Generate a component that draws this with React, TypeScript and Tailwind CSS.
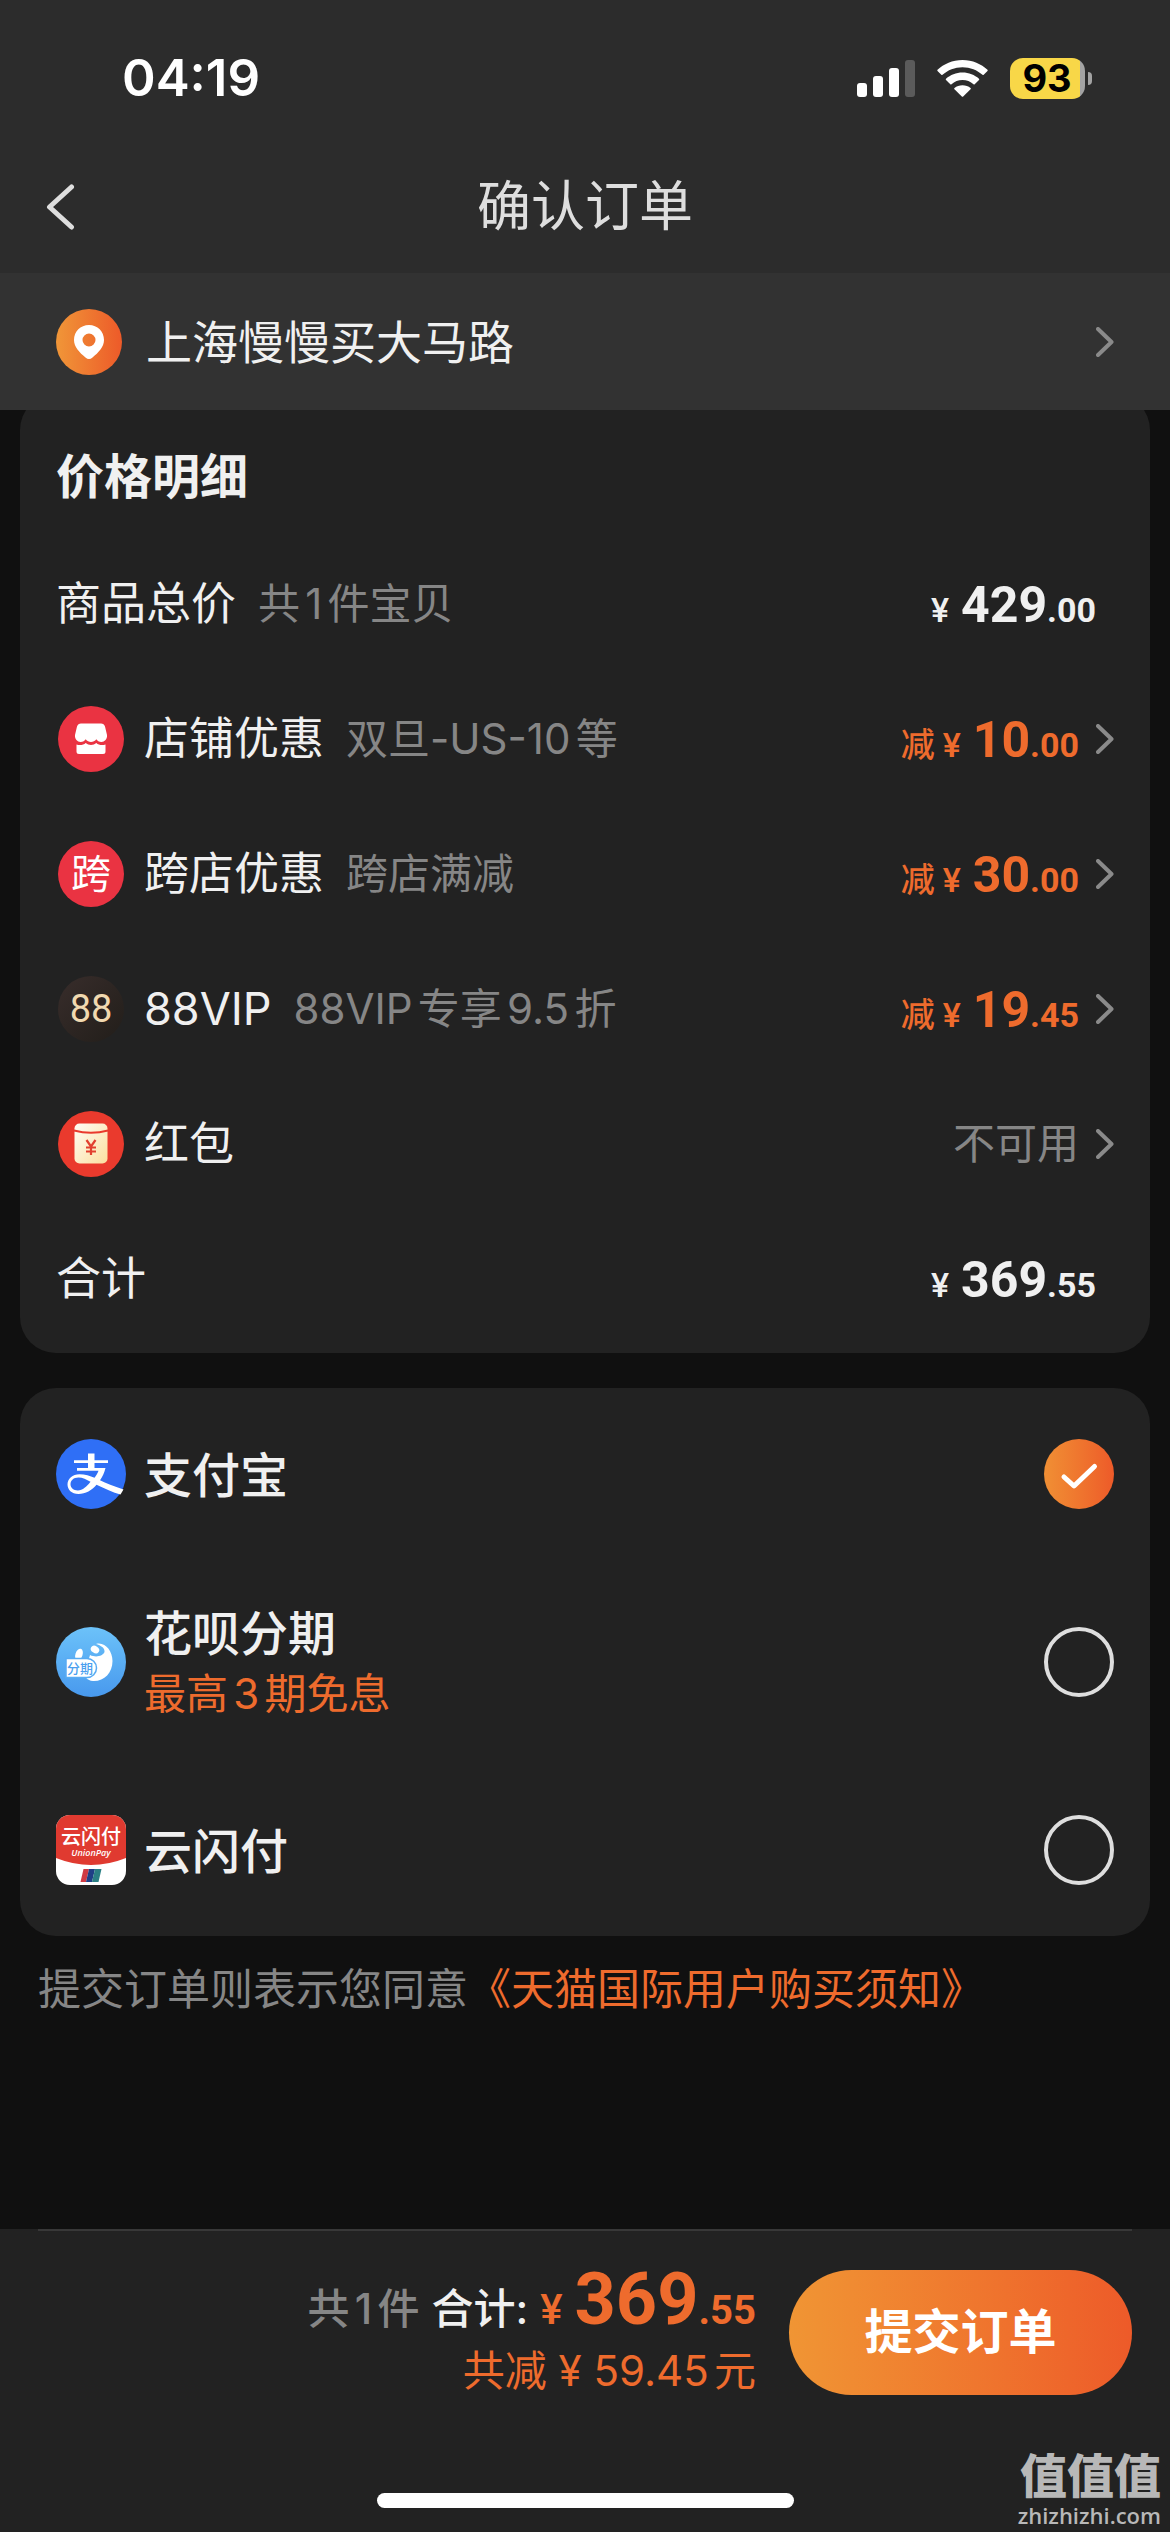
import React, { useState } from "react"
import clsx from "clsx"

const NUM_FONT = "font-[Roboto,'Noto_Sans_CJK_SC',sans-serif]"

function StatusBar() {
  return (
    <div className="flex h-[141px] items-center justify-between pt-[15px] pr-[78px] pl-[122px]">
      <span className="text-[51px] leading-[60px] font-semibold text-white">04:19</span>
      <div className="flex items-center gap-[22px]">
        <svg width="58" height="38" viewBox="0 0 58 38" aria-hidden="true">
          <rect x="0" y="24" width="10" height="14" rx="3" fill="#fff" />
          <rect x="16" y="17" width="10" height="21" rx="3" fill="#fff" />
          <rect x="32" y="9" width="10" height="29" rx="3" fill="#fff" />
          <rect x="48" y="1" width="10" height="37" rx="3" fill="#5b5b5b" />
        </svg>
        <svg width="51" height="38" viewBox="0 0 51 38" fill="#fff" aria-hidden="true">
          <path d="M25.500 1C35.500 1 44.300 5 50.500 10.800Q51 11.400 50.500 12L46.700 15.800Q46.100 16.300 45.500 15.800C40.200 11 33.200 8.200 25.500 8.200S10.800 11 5.500 15.800Q4.900 16.300 4.300 15.800L.5 12Q0 11.400.5 10.800C6.700 5 15.500 1 25.500 1Z" />
          <path d="M25.500 13.500C31.900 13.500 37.600 15.900 42 19.700Q42.600 20.300 42 20.900L37.700 25.200Q37.100 25.700 36.500 25.200C33.500 22.600 29.700 21 25.500 21S17.500 22.600 14.500 25.200Q13.900 25.700 13.300 25.200L9 20.900Q8.400 20.300 9 19.700C13.400 15.900 19.100 13.500 25.500 13.500Z" />
          <path d="M25.500 26.300C28.600 26.300 31.400 27.300 33.500 29.100Q34.100 29.700 33.500 30.300L26.200 37.500Q25.500 38.100 24.800 37.500L17.500 30.300Q16.900 29.700 17.500 29.100C19.600 27.300 22.400 26.300 25.500 26.300Z" />
        </svg>
        <div className="flex items-center gap-[3px]">
          <div className="h-[41px] w-[75px] rounded-[13px] bg-[linear-gradient(to_right,#f8d748_70px,#a3a3a3_70px)] pr-px text-center text-[38px] leading-[41px] font-bold text-black">
            93
          </div>
          <div className="h-[13px] w-[4px] rounded-r-full bg-[#a3a3a3]" />
        </div>
      </div>
    </div>
  )
}

function ChevronRight() {
  return (
    <svg
      width="18"
      height="30"
      viewBox="0 0 18 30"
      fill="none"
      stroke="#8a8a8a"
      strokeWidth="4"
      strokeLinecap="round"
      strokeLinejoin="round"
      className="shrink-0"
      aria-hidden="true"
    >
      <path d="M2 2L15.500 15L2 28" />
    </svg>
  )
}

function PinIcon() {
  return (
    <svg width="66" height="66" viewBox="0 0 66 66" aria-hidden="true">
      <defs>
        <linearGradient id="pin" x1="0" x2="1" y1="0" y2="0">
          <stop offset="0" stopColor="#f09638" />
          <stop offset="1" stopColor="#ed5a29" />
        </linearGradient>
      </defs>
      <circle cx="33" cy="33" r="33" fill="url(#pin)" />
      <path
        fillRule="evenodd"
        fill="#fff"
        d="M33 16C41.500 16 48 22.500 48 31C48 38 42.500 43.500 36.500 48.500Q33 51.500 29.500 48.500C23.500 43.500 18 38 18 31C18 22.500 24.500 16 33 16ZM33 24.500A6.500 6.500 0 1 0 33 37.500A6.500 6.500 0 1 0 33 24.500Z"
      />
    </svg>
  )
}

function ShopIcon() {
  return (
    <svg width="66" height="66" viewBox="0 0 66 66" aria-hidden="true">
      <circle cx="33" cy="33" r="33" fill="#ea3342" />
      <path
        fill="#fff"
        d="M23 17.500H43Q46 17.500 47 20.500L49 29C49.500 33 46.500 36 43.500 36C41 36 39.300 34.800 38.300 33.200C37 35 35 36 33 36S29 35 27.700 33.200C26.700 34.800 25 36 22.500 36C19.500 36 16.500 33 17 29L19 20.500Q20 17.500 23 17.500Z"
      />
      <path
        fill="#fff"
        d="M18.500 38.500C22 39.700 25.500 39 27.700 37C30.500 39.500 35.500 39.500 38.300 37C40.500 39 44 39.700 47.500 38.500V45.500Q47.500 48 45 48H21Q18.500 48 18.500 45.500Z"
      />
    </svg>
  )
}

function CrossShopIcon() {
  return (
    <span className="flex size-[66px] items-center justify-center rounded-full bg-[#ea3342] text-[40px] leading-none text-white">
      跨
    </span>
  )
}

function VipIcon() {
  return (
    <span className="flex size-[66px] items-center justify-center rounded-full bg-linear-to-br from-[#382d2b] to-[#221e1a]">
      <span className={clsx(NUM_FONT, "text-[38px] leading-none text-[#f1d9b0]")}>88</span>
    </span>
  )
}

function RedPacketIcon() {
  return (
    <svg width="66" height="66" viewBox="0 0 66 66" aria-hidden="true">
      <defs>
        <linearGradient id="packet" x1="0" x2="1" y1="0" y2="1">
          <stop offset="0" stopColor="#fffdf5" />
          <stop offset="1" stopColor="#fbdf9f" />
        </linearGradient>
      </defs>
      <circle cx="33" cy="33" r="33" fill="#ea3a2d" />
      <rect x="16.500" y="12.500" width="33" height="40" rx="5" fill="url(#packet)" />
      <path d="M16 19.500Q33 24 50 19.500" fill="none" stroke="#ea3a2d" strokeWidth="2" />
      <path
        d="M28.500 29L33 35.500L37.500 29M33 35.500V44M28 36.500H38M28 40.500H38"
        fill="none"
        stroke="#e2402f"
        strokeWidth="2.200"
      />
    </svg>
  )
}

function AlipayIcon() {
  return (
    <svg width="70" height="70" viewBox="0 0 70 70" aria-hidden="true">
      <circle cx="35" cy="35" r="35" fill="#2f6ff6" />
      <path
        fill="#fff"
        d="M32 14.500H38.500V21.300H52V24H38.500V29H49.500C48.500 33.500 46.500 37.800 44 41.300C50 44.500 57.500 47 67.500 50.500L64.500 55.500C57 53.500 48.500 49.500 40.500 45.700C36 51 29.500 55 22.500 55C15.500 55 11.500 50.500 11.500 45.500C11.500 39.500 16.500 35.200 23.500 35.200C29 35.200 34 36.800 38.500 38.700C40.300 36.500 41.700 34.200 42.500 31.700H21V29H32V24H18V21.300H32Z"
      />
      <path
        fill="#2f6ff6"
        d="M34.500 42.800C30.500 40.500 26.500 38.500 22.500 38.500C17.500 38.500 14.500 41.300 14.500 45.300C14.500 49 17.500 51.500 21.800 51.500C26.500 51.500 31 47.500 34.500 42.800Z"
      />
    </svg>
  )
}

function HuabeiIcon() {
  return (
    <svg width="70" height="70" viewBox="0 0 70 70" aria-hidden="true">
      <defs>
        <linearGradient id="huabei" x1="0" x2="0" y1="0" y2="1">
          <stop offset="0" stopColor="#6cc2f9" />
          <stop offset="1" stopColor="#4899ee" />
        </linearGradient>
      </defs>
      <circle cx="35" cy="35" r="35" fill="url(#huabei)" />
      <path
        fill="#fff"
        d="M40 17C49 14.500 56.500 24 56.500 34C56.500 46 48 54.500 37 54C31 53.500 28.500 50 29 45L34 28C40 31 47 29 48.500 25C49 21 45 18.500 40 17Z"
      />
      <ellipse cx="39" cy="22.500" rx="4.500" ry="3.500" fill="#fff" transform="rotate(35 39 22.500)" />
      <ellipse cx="23" cy="27.500" rx="3.600" ry="6" fill="#fff" transform="rotate(18 23 27.500)" />
      <path d="M10 31.500H31A9.500 9.500 0 0 1 31 50.500H10Z" fill="#fff" stroke="#58abf3" strokeWidth="1.500" />
      <text
        x="24"
        y="46"
        fontSize="13"
        fontWeight="500"
        textAnchor="middle"
        fill="#4c9fef"
        fontFamily="Noto Sans CJK SC, sans-serif"
      >
        分期
      </text>
    </svg>
  )
}

function UnionPayIcon() {
  return (
    <svg width="70" height="70" viewBox="0 0 70 70" aria-hidden="true">
      <defs>
        <clipPath id="unionpay">
          <rect width="70" height="70" rx="14" />
        </clipPath>
      </defs>
      <g clipPath="url(#unionpay)">
        <rect width="70" height="70" fill="#fff" />
        <path d="M0 0H70V43Q35 57 0 43Z" fill="#e03a30" />
        <path d="M27.500 54H33L30 67H24.500Z" fill="#cf3a44" />
        <path d="M33 54H39L36 67H30Z" fill="#1f3f86" />
        <path d="M39 54H45.500L42.500 67H36Z" fill="#2a7f83" />
      </g>
      <text
        x="35"
        y="29"
        fontSize="20"
        fontWeight="500"
        textAnchor="middle"
        fill="#fff"
        fontFamily="Noto Sans CJK SC, sans-serif"
      >
        云闪付
      </text>
      <text
        x="35"
        y="41"
        fontSize="9"
        fontWeight="600"
        fontStyle="italic"
        textAnchor="middle"
        fill="#fff"
        fontFamily="Open Sans, sans-serif"
      >
        UnionPay
      </text>
    </svg>
  )
}

function Price({ value, prefix }: { value: string; prefix?: string }) {
  const [whole, cents] = value.split(".")
  return (
    <span className={clsx(NUM_FONT, "flex items-baseline pt-2 leading-[60px] font-bold")}>
      {prefix && <span className="mr-2 text-[34px] font-medium">{prefix}</span>}
      <span className="mr-3 text-[34px] font-medium">¥</span>
      <span className="text-[50px]">{whole}</span>
      <span className="text-[34px]">.{cents}</span>
    </span>
  )
}

const discounts = [
  { icon: <ShopIcon />, name: "店铺优惠", note: "双旦-US-10等", value: "10.00" },
  { icon: <CrossShopIcon />, name: "跨店优惠", note: "跨店满减", value: "30.00" },
  { icon: <VipIcon />, name: "88VIP", note: "88VIP专享9.5折", value: "19.45" },
  { icon: <RedPacketIcon />, name: "红包" },
]

const payments = [
  { id: "alipay", icon: <AlipayIcon />, name: "支付宝" },
  { id: "huabei", icon: <HuabeiIcon />, name: "花呗分期", note: "最高3期免息" },
  { id: "unionpay", icon: <UnionPayIcon />, name: "云闪付" },
]

function PriceDetails() {
  return (
    <section className="mx-5 -mt-4 rounded-[36px] bg-[#222222] px-9 pt-4 pb-[7px]">
      <h2 className="flex h-[126px] items-center pt-2 text-[48px] font-bold">价格明细</h2>
      <div className="flex h-[135px] items-center justify-between pr-[18px]">
        <div className="flex items-center gap-[22px]">
          <span className="text-[45px]">商品总价</span>
          <span className="text-[42px] text-[#868686]">共1件宝贝</span>
        </div>
        <Price value="429.00" />
      </div>
      {discounts.map((item) => (
        <button key={item.name} type="button" className="flex h-[135px] w-full items-center text-left">
          <span className="flex w-[70px] shrink-0 justify-center">{item.icon}</span>
          <span className="ml-[18px] text-[45px]">{item.name}</span>
          {item.note && <span className="ml-[22px] text-[42px] text-[#868686]">{item.note}</span>}
          <span className="ml-auto flex items-center gap-[17px] text-[#ee6b2d]">
            {item.value ? (
              <Price value={item.value} prefix="减" />
            ) : (
              <span className="text-[42px] text-[#868686]">不可用</span>
            )}
            <ChevronRight />
          </span>
        </button>
      ))}
      <div className="flex h-[135px] items-center justify-between pr-[18px]">
        <span className="text-[45px]">合计</span>
        <Price value="369.55" />
      </div>
    </section>
  )
}

function PaymentMethods() {
  const [selected, setSelected] = useState("alipay")

  return (
    <section className="mx-5 mt-[35px] flex flex-col gap-[68px] rounded-[36px] bg-[#222222] px-9 py-[26px]">
      {payments.map((item) => (
        <label key={item.id} className="flex h-[120px] items-center">
          {item.icon}
          <span className="ml-[18px] flex flex-col pt-1">
            <span className="text-[48px] leading-[60px] font-medium">{item.name}</span>
            {item.note && <span className="text-[42px] leading-[60px] text-[#ee6b2d]">{item.note}</span>}
          </span>
          <span className="ml-auto grid">
            <input
              type="radio"
              name="payment"
              value={item.id}
              checked={selected === item.id}
              onChange={() => setSelected(item.id)}
              className="peer col-start-1 row-start-1 size-[70px] appearance-none rounded-full border-4 border-[#dedede] checked:border-0 checked:bg-linear-to-r checked:from-[#f08f34] checked:to-[#ed5a29]"
            />
            <svg
              width="70"
              height="70"
              viewBox="0 0 70 70"
              fill="none"
              stroke="#fff"
              strokeWidth="5"
              strokeLinecap="round"
              strokeLinejoin="round"
              className="invisible col-start-1 row-start-1 peer-checked:visible"
              aria-hidden="true"
            >
              <path d="M20 38L30 47L50.500 27.500" />
            </svg>
          </span>
        </label>
      ))}
    </section>
  )
}

function SubmitBar() {
  return (
    <footer className="relative mt-auto bg-[#222222]">
      <div className="mx-[38px] h-[2px] bg-[#383838]" />
      <div className="flex items-center justify-end gap-[33px] pt-8 pr-[38px]">
        <div className="flex flex-col items-end pt-1">
          <div className="flex h-[74px] items-baseline leading-[66px] text-[#ee6b2d]">
            <span className="text-[42px] font-medium text-[#868686]">共1件</span>
            <span className="ml-3 text-[42px] font-medium text-[#f0f0f0]">合计:</span>
            <span className={clsx(NUM_FONT, "ml-3 text-[42px] font-medium")}>¥</span>
            <span className={clsx(NUM_FONT, "ml-3 text-[72px] font-bold")}>369</span>
            <span className={clsx(NUM_FONT, "text-[40px] font-bold")}>.55</span>
          </div>
          <span className="text-[42px] leading-[60px] text-[#ee6b2d]">共减 ¥ 59.45元</span>
        </div>
        <button
          type="button"
          className="h-[125px] w-[343px] rounded-full bg-linear-to-r from-[#f09534] to-[#ed5a29] text-[48px] font-bold text-white"
        >
          提交订单
        </button>
      </div>
      <div className="mx-auto mt-[92px] mb-6 h-[15px] w-[417px] rounded-full bg-white" />
      <div className="absolute right-[9px] bottom-1 text-right text-[#b8b8b8]">
        <div className="text-[47px] leading-[52px] font-black">值值值</div>
        <div className="font-['Open_Sans'] text-[22px] leading-[26px] font-semibold">zhizhizhi.com</div>
      </div>
    </footer>
  )
}

export default function App() {
  return (
    <div className="flex min-h-screen flex-col bg-[#101010] font-[Inter,'Noto_Sans_CJK_SC',sans-serif] leading-[60px] text-[#f0f0f0] [text-autospace:normal]">
      <header className="relative z-10">
        <div className="bg-[#2c2c2c]">
          <StatusBar />
          <div className="grid h-[132px] grid-cols-[1fr_auto_1fr] items-center px-[46px]">
            <button type="button" aria-label="返回" className="justify-self-start">
              <svg
                width="29"
                height="46"
                viewBox="0 0 29 46"
                fill="none"
                stroke="#dedede"
                strokeWidth="5"
                strokeLinecap="round"
                strokeLinejoin="round"
              >
                <path d="M25.500 3L3.500 23L25.500 43" />
              </svg>
            </button>
            <h1 className="text-[54px] text-[#dedede]">确认订单</h1>
          </div>
        </div>
        <button type="button" className="flex h-[137px] w-full items-center bg-[#323232] pr-14 pl-14 text-left">
          <PinIcon />
          <span className="ml-6 text-[46px]">上海慢慢买大马路</span>
          <span className="ml-auto">
            <ChevronRight />
          </span>
        </button>
      </header>
      <main>
        <PriceDetails />
        <PaymentMethods />
        <p className="mt-[23px] px-[38px] text-[43px] text-[#868686]">
          提交订单则表示您同意
          <a href="#terms" className="text-[#ee6b2d]">
            《天猫国际用户购买须知》
          </a>
        </p>
      </main>
      <SubmitBar />
    </div>
  )
}
